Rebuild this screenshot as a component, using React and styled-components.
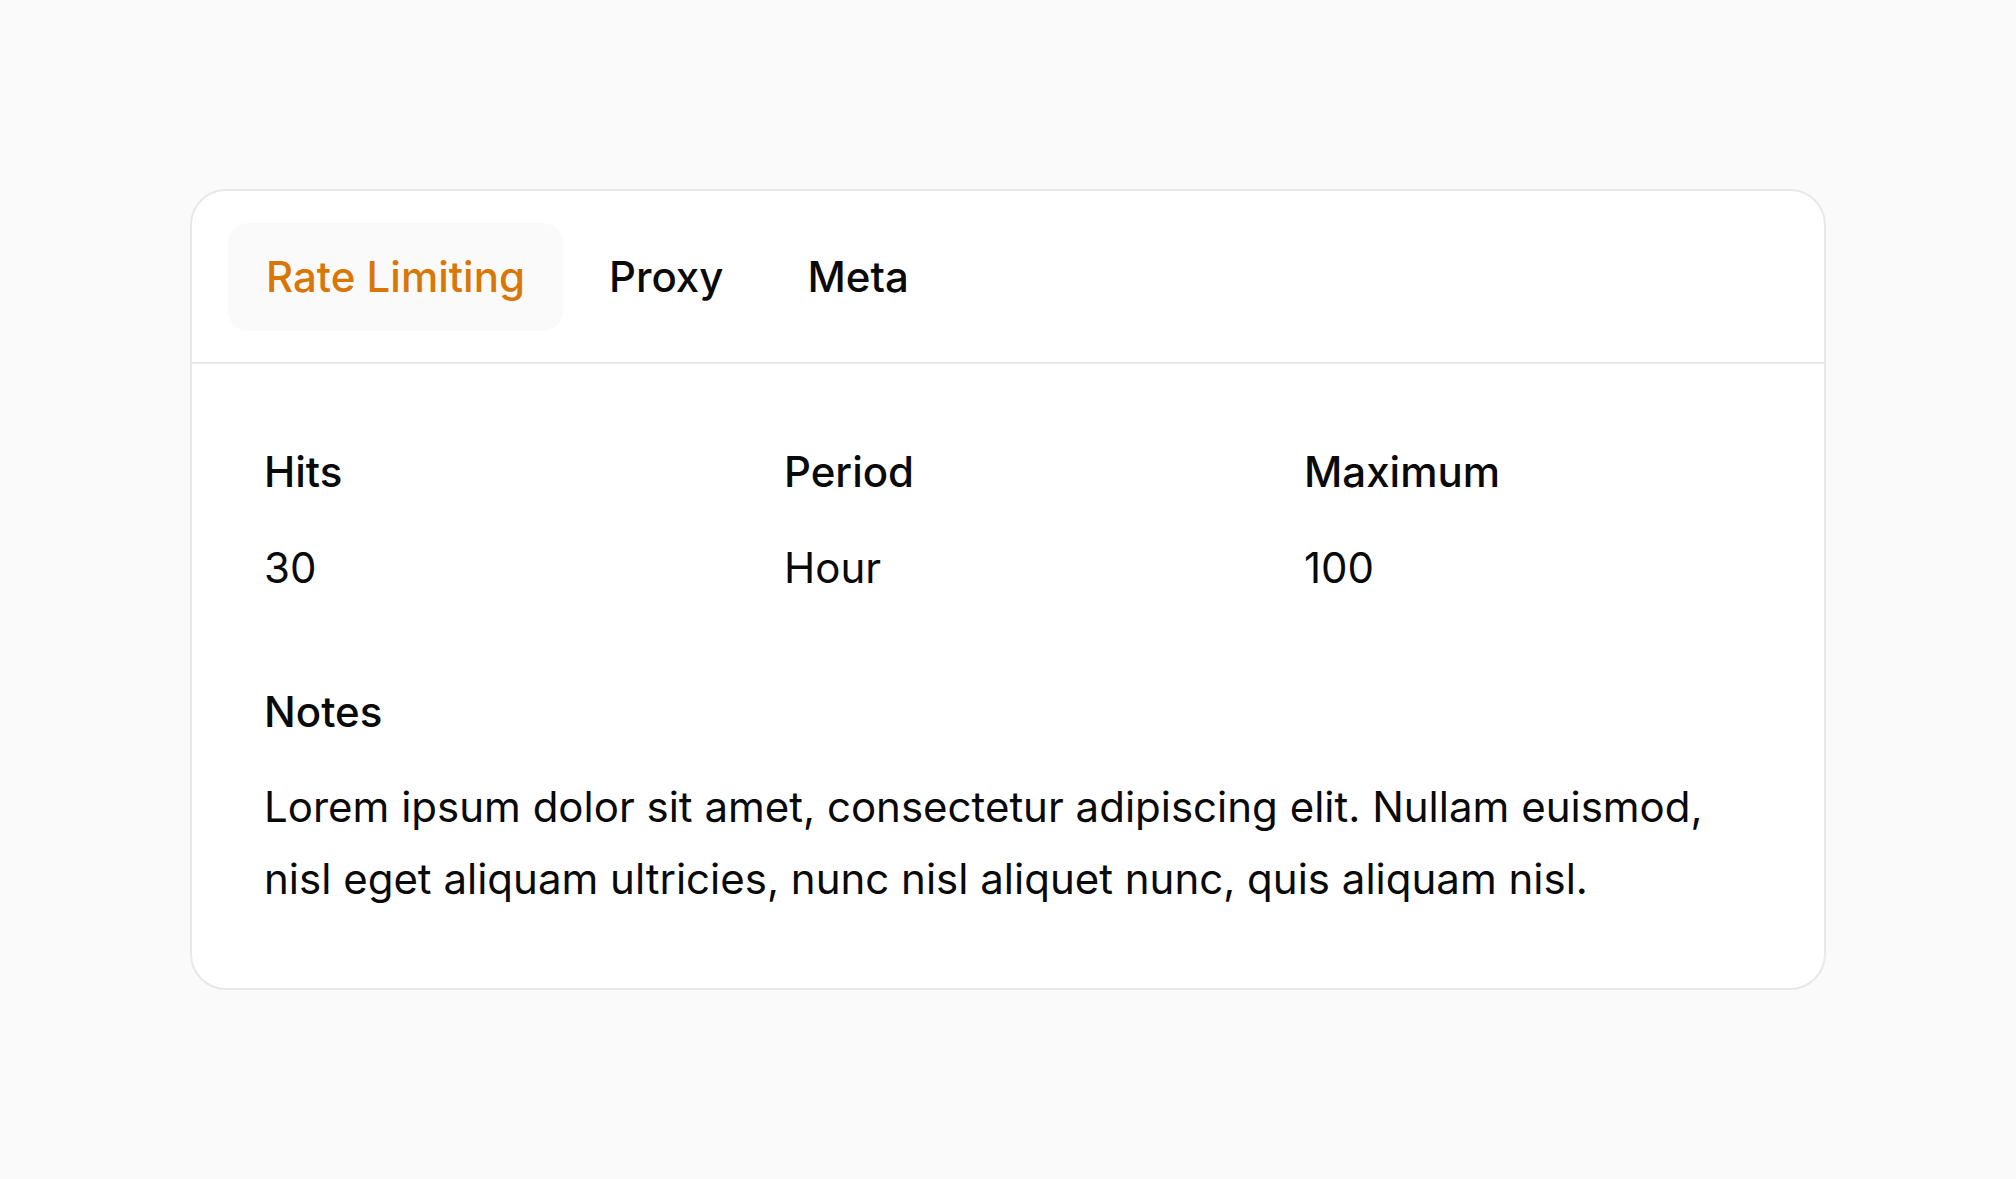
import React, { useState } from 'react';
import styled, { createGlobalStyle } from 'styled-components';

const GlobalStyle = createGlobalStyle`
    * {
        box-sizing: border-box;
    }
    body {
        margin: 0;
        background: #fafafa;
        font-family: Inter, "Noto Sans", sans-serif;
        color: #0a0a0a;
    }
`;

const tabs = ['Rate Limiting', 'Proxy', 'Meta'];

const stats = [
    { label: 'Hits', value: '30' },
    { label: 'Period', value: 'Hour' },
    { label: 'Maximum', value: '100' },
];

function App() {
    const [active, setActive] = useState('Rate Limiting');

    return (
        <Page>
            <GlobalStyle />
            <Card>
                <TabBar>
                    {tabs.map((tab) => (
                        <Tab key={tab} $active={active === tab} onClick={() => setActive(tab)}>
                            {tab}
                        </Tab>
                    ))}
                </TabBar>
                <Body>
                    <StatGrid>
                        {stats.map(({ label, value }) => (
                            <Stat key={label}>
                                <Label>{label}</Label>
                                <Value>{value}</Value>
                            </Stat>
                        ))}
                    </StatGrid>
                    <Notes>
                        <Label>Notes</Label>
                        <Paragraph>
                            Lorem ipsum dolor sit amet, consectetur adipiscing elit. Nullam euismod,
                            nisl eget aliquam ultricies, nunc nisl aliquet nunc, quis aliquam nisl.
                        </Paragraph>
                    </Notes>
                </Body>
            </Card>
        </Page>
    );
}

const Page = styled.div`
    min-height: 100vh;
    display: flex;
    align-items: center;
    justify-content: center;
`;

const Card = styled.div`
    width: 1636px;
    background: #ffffff;
    border: 2px solid #e8e8e8;
    border-radius: 36px;
    overflow: hidden;
`;

const TabBar = styled.div`
    display: flex;
    gap: 8px;
    padding: 32px 36px 31px;
    border-bottom: 2px solid #e8e8e8;
`;

const Tab = styled.button`
    font-family: inherit;
    font-size: 42px;
    font-weight: 500;
    line-height: 52px;
    padding: 28px 38px;
    border: none;
    border-radius: 20px;
    cursor: pointer;
    background: ${({ $active }) => ($active ? '#fafafa' : 'transparent')};
    color: ${({ $active }) => ($active ? '#d97706' : '#0a0a0a')};
`;

const Body = styled.div`
    padding: 84px 72px 73px;
`;

const StatGrid = styled.div`
    display: grid;
    grid-template-columns: repeat(3, 1fr);
    gap: 72px;
`;

const Stat = styled.div`
    display: flex;
    flex-direction: column;
    gap: 48px;
`;

const Label = styled.div`
    font-size: 42px;
    font-weight: 500;
    line-height: 48px;
`;

const Value = styled.div`
    font-size: 42px;
    font-weight: 400;
    line-height: 48px;
`;

const Notes = styled.div`
    margin-top: 96px;
    display: flex;
    flex-direction: column;
    gap: 35px;
`;

const Paragraph = styled.p`
    margin: 0;
    font-size: 42px;
    line-height: 72px;
`;

export default App;
